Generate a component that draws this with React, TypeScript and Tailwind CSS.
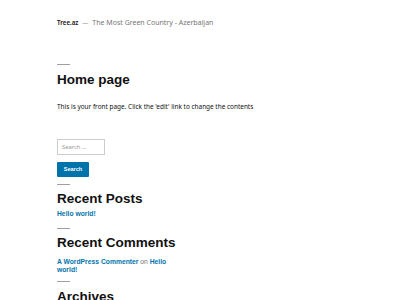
export default function App() {
  return (
    <div className="min-h-[300px] w-[400px] overflow-hidden bg-white pl-[57px] font-['Liberation_Sans',Arial,sans-serif] text-[#111]">
      {/* Site header */}
      <header className="pt-[18px] flex items-center h-[28px] leading-[10px] whitespace-nowrap font-['Noto_Sans',sans-serif]">
        <span className="text-[6.2px] font-semibold text-[#111]">Tree.az</span>
        <span className="mx-[4px] text-[6px] text-[#767676]">—</span>
        <span className="text-[7px] text-[#767676]">The Most Green Country - Azerbaijan</span>
      </header>

      {/* Page */}
      <div className="mt-[36px] h-px w-[13px] bg-[#a0a0a0]" />
      <h1 className="mt-[7.5px] text-[13.5px] leading-none font-bold">Home page</h1>
      <p className="mt-[17.5px] text-[6.45px] leading-none whitespace-nowrap text-[#111] font-['Noto_Sans',sans-serif]">
        This is your front page. Click the 'edit' link to change the contents
      </p>

      {/* Widgets */}
      <div className="w-[125px]">
        <div className="mt-[29px] flex h-[16px] w-[48px] items-center border border-[#ccc] bg-white px-[4px] text-[5.8px] text-[#999] font-['Noto_Sans',sans-serif]">
          Search …
        </div>
        <button className="mt-[7px] block h-[15px] w-[32px] rounded-[1px] bg-[#0073aa] text-[5.5px] font-bold text-white">
          Search
        </button>

        <div className="mt-[7px] h-px w-[13px] bg-[#a0a0a0]" />
        <h2 className="mt-[7px] text-[13.5px] leading-none font-bold">Recent Posts</h2>
        <a className="mt-[6px] block text-[6.75px] leading-none font-bold text-[#0073aa]">Hello world!</a>

        <div className="mt-[10px] h-px w-[13px] bg-[#a0a0a0]" />
        <h2 className="mt-[7px] text-[13.5px] leading-none font-bold">Recent Comments</h2>
        <p className="mt-[8.4px] text-[6.75px] leading-[8px] text-[#767676]">
          <span className="font-bold text-[#0073aa]">A WordPress Commenter</span> on{" "}
          <span className="font-bold text-[#0073aa]">Hello world!</span>
        </p>

        <div className="mt-[6.6px] h-px w-[13px] bg-[#a0a0a0]" />
        <h2 className="mt-[8.6px] text-[13.5px] leading-none font-bold">Archives</h2>
      </div>
    </div>
  );
}
